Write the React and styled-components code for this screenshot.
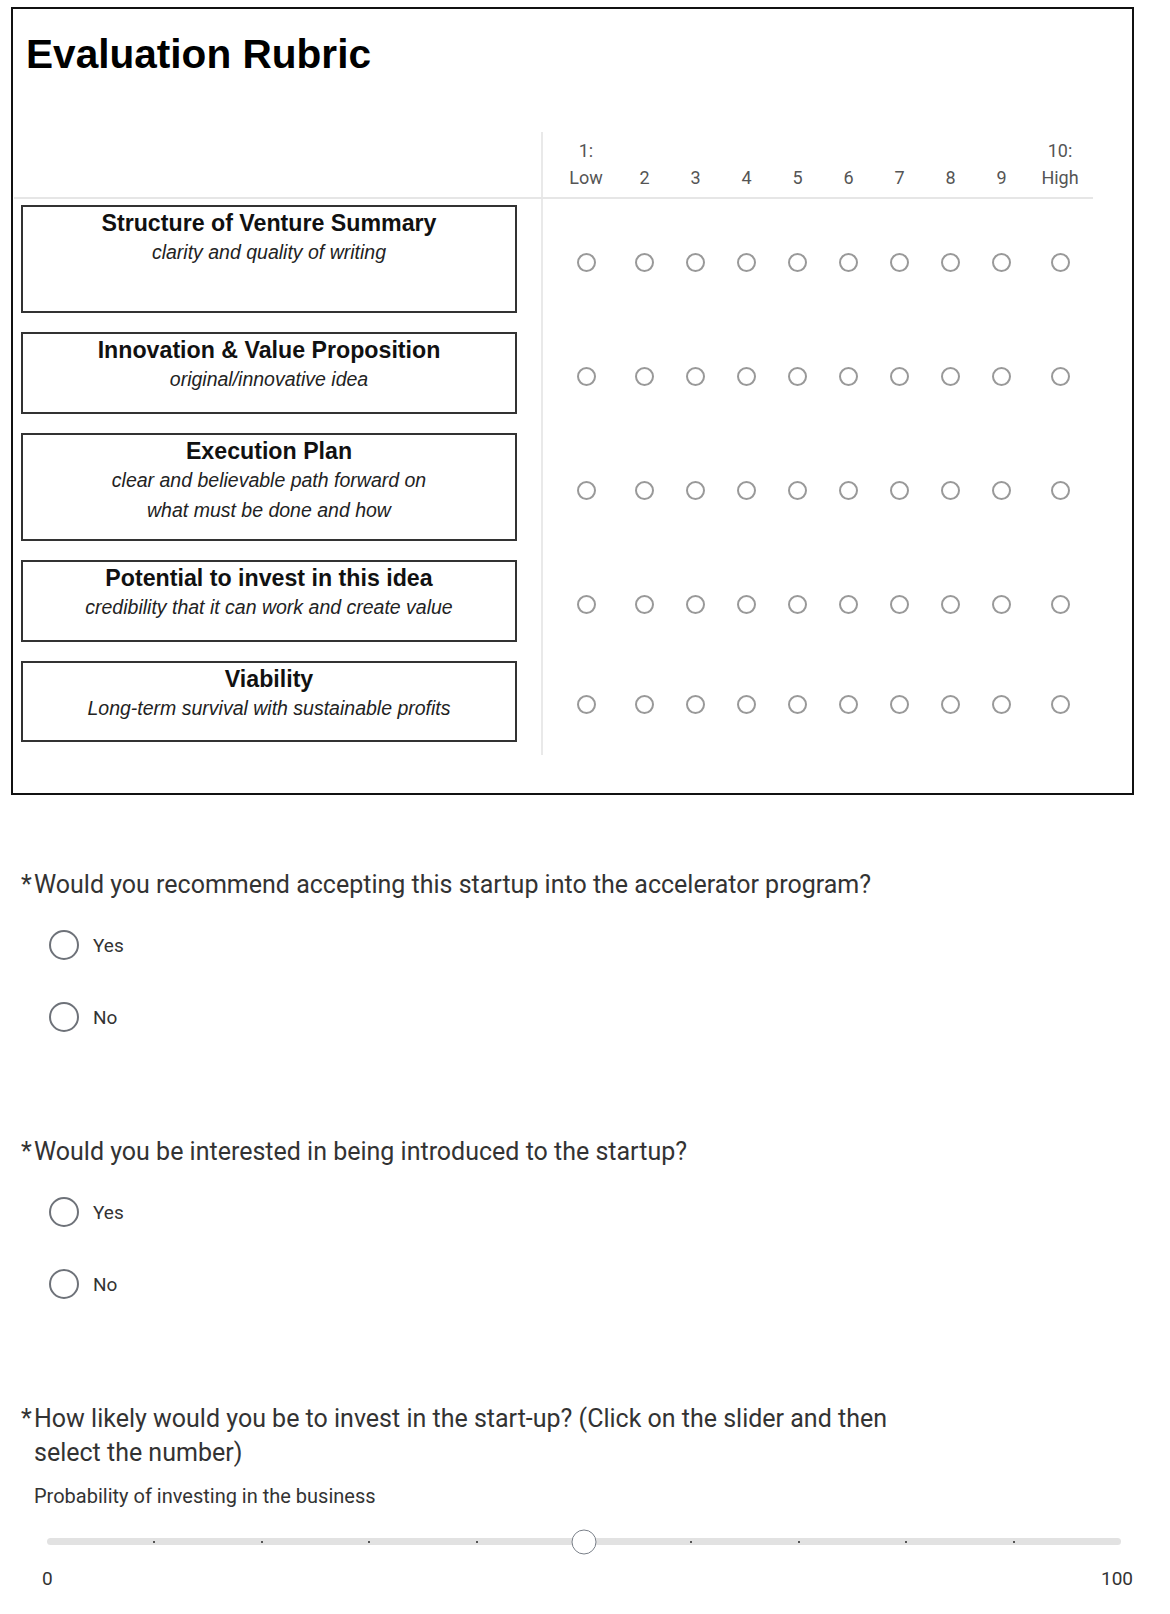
import React from 'react';
import styled, { createGlobalStyle } from 'styled-components';

const criteria = [
  { title: 'Structure of Venture Summary', lines: ['clarity and quality of writing'], height: 108 },
  { title: 'Innovation & Value Proposition', lines: ['original/innovative idea'], height: 82 },
  { title: 'Execution Plan', lines: ['clear and believable path forward on', 'what must be done and how'], height: 108 },
  { title: 'Potential to invest in this idea', lines: ['credibility that it can work and create value'], height: 82 },
  { title: 'Viability', lines: ['Long-term survival with sustainable profits'], height: 81 },
];

const scale = [
  ['1:', 'Low'], ['', '2'], ['', '3'], ['', '4'], ['', '5'],
  ['', '6'], ['', '7'], ['', '8'], ['', '9'], ['10:', 'High'],
];

const ticks = [10, 20, 30, 40, 60, 70, 80, 90];

const YesNo = () => (
  <Options>
    <Option><Radio /><OptionLabel>Yes</OptionLabel></Option>
    <Option><Radio /><OptionLabel>No</OptionLabel></Option>
  </Options>
);

const App = () => (
  <Page>
    <GlobalStyle />
    <RubricBox>
      <Title>Evaluation Rubric</Title>
      <Matrix>
        <HeaderRow>
          <StatementCell $header />
          <ChoiceGroup $header>
            {scale.map(([top, bottom]) => (
              <ScaleLabel key={bottom}>
                <span>{top}</span>
                <span>{bottom}</span>
              </ScaleLabel>
            ))}
          </ChoiceGroup>
        </HeaderRow>
        {criteria.map((c) => (
          <BodyRow key={c.title}>
            <StatementCell>
              <CriterionBox $height={c.height}>
                <CriterionTitle>{c.title}</CriterionTitle>
                {c.lines.map((l) => (
                  <CriterionNote key={l}>{l}</CriterionNote>
                ))}
              </CriterionBox>
            </StatementCell>
            <ChoiceGroup>
              {scale.map(([, label]) => (
                <ChoiceSlot key={label}><SmallRadio /></ChoiceSlot>
              ))}
            </ChoiceGroup>
          </BodyRow>
        ))}
      </Matrix>
    </RubricBox>

    <Question $first>
      <QuestionText>
        <Asterisk>*</Asterisk>
        <span>Would you recommend accepting this startup into the accelerator program?</span>
      </QuestionText>
      <YesNo />
    </Question>

    <Question>
      <QuestionText>
        <Asterisk>*</Asterisk>
        <span>Would you be interested in being introduced to the startup?</span>
      </QuestionText>
      <YesNo />
    </Question>

    <Question>
      <QuestionText>
        <Asterisk>*</Asterisk>
        <span>How likely would you be to invest in the start-up? (Click on the slider and then select the number)</span>
      </QuestionText>
      <SliderCaption>Probability of investing in the business</SliderCaption>
      <Slider>
        <Track>
          {ticks.map((t) => (
            <Tick key={t} style={{ left: `${t}%` }} />
          ))}
          <Handle style={{ left: '50%' }} />
        </Track>
      </Slider>
      <SliderEnds>
        <span>0</span>
        <span>100</span>
      </SliderEnds>
    </Question>
  </Page>
);

export default App;

const GlobalStyle = createGlobalStyle`
  body {
    margin: 0;
    background: #fff;
    color: #333;
    font-family: Roboto, "Liberation Sans", sans-serif;
  }
`;

const Page = styled.div`
  padding: 7px 36px 30px 11px;
`;

const RubricBox = styled.div`
  width: 1123px;
  box-sizing: border-box;
  border: 2px solid #111;
  padding: 0 0 38px 1px;
`;

const Title = styled.h1`
  margin: 25px 0 0 12px;
  font-family: "Liberation Sans", Arial, sans-serif;
  font-size: 40.6px;
  line-height: 40px;
  font-weight: 700;
  color: #000;
`;

const Matrix = styled.div`
  margin-top: 58px;
  width: 1079px;
`;

const HeaderRow = styled.div`
  display: flex;
  border-bottom: 2px solid #e6e6e6;
`;

const BodyRow = styled.div`
  display: flex;
`;

const StatementCell = styled.div`
  width: 527px;
  box-sizing: border-box;
  padding: ${(p) => (p.$header ? '0' : '6px 24px 13px 7px')};
`;

const ChoiceGroup = styled.div`
  display: grid;
  grid-template-columns: 66px repeat(8, 51px) 66px;
  border-left: 2px solid #e9e9e9;
  padding: ${(p) => (p.$header ? '5px 0 6px 10px' : '0 0 1px 10px')};
  align-items: ${(p) => (p.$header ? 'end' : 'center')};
`;

const ScaleLabel = styled.div`
  display: flex;
  flex-direction: column;
  align-items: center;
  font-size: 18px;
  line-height: 27px;
  color: #555;
  & span {
    min-height: 27px;
  }
`;

const ChoiceSlot = styled.div`
  display: flex;
  justify-content: center;
`;

const SmallRadio = styled.span`
  width: 19px;
  height: 19px;
  box-sizing: border-box;
  border: 2px solid #999;
  border-radius: 50%;
`;

const CriterionBox = styled.div`
  height: ${(p) => p.$height}px;
  box-sizing: border-box;
  border: 2px solid #333;
  padding-top: 1px;
  text-align: center;
  font-family: "Liberation Sans", Arial, sans-serif;
  color: #111;
`;

const CriterionTitle = styled.div`
  font-size: 23.2px;
  line-height: 30px;
  font-weight: 700;
`;

const CriterionNote = styled.div`
  font-size: 19.5px;
  line-height: 29.5px;
  font-style: italic;
  color: #222;
`;

const Question = styled.div`
  margin: ${(p) => (p.$first ? '73px' : '82px')} 0 0 10px;
`;

const QuestionText = styled.div`
  display: flex;
  max-width: 910px;
  font-size: 25px;
  line-height: 34px;
  color: #333;
`;

const Asterisk = styled.span`
  flex: 0 0 13px;
`;

const Options = styled.div`
  margin-top: 7px;
`;

const Option = styled.div`
  display: flex;
  align-items: center;
  height: 72px;
  padding-left: 28px;
`;

const Radio = styled.span`
  width: 30px;
  height: 30px;
  box-sizing: border-box;
  border: 2.5px solid #6e7279;
  border-radius: 50%;
`;

const OptionLabel = styled.span`
  margin-left: 14px;
  font-size: 19px;
  color: #333;
`;

const SliderCaption = styled.div`
  margin: 12px 0 0 13px;
  font-size: 20px;
  line-height: 28px;
  color: #333;
`;

const Slider = styled.div`
  margin: 19px 0 0 26px;
  width: 1074px;
  height: 25px;
  display: flex;
  align-items: center;
`;

const Track = styled.div`
  position: relative;
  width: 100%;
  height: 7px;
  border-radius: 4px;
  background: #e2e2e2;
`;

const Tick = styled.span`
  position: absolute;
  top: 2.5px;
  width: 2px;
  height: 2px;
  margin-left: -1px;
  background: #555;
`;

const Handle = styled.span`
  position: absolute;
  top: 50%;
  width: 25px;
  height: 25px;
  box-sizing: border-box;
  transform: translate(-50%, -50%);
  border: 1.5px solid #7a8089;
  border-radius: 50%;
  background: #fff;
`;

const SliderEnds = styled.div`
  display: flex;
  justify-content: space-between;
  margin: 11px 0 0 21px;
  width: 1091px;
  font-size: 19px;
  line-height: 28px;
  color: #333;
`;
